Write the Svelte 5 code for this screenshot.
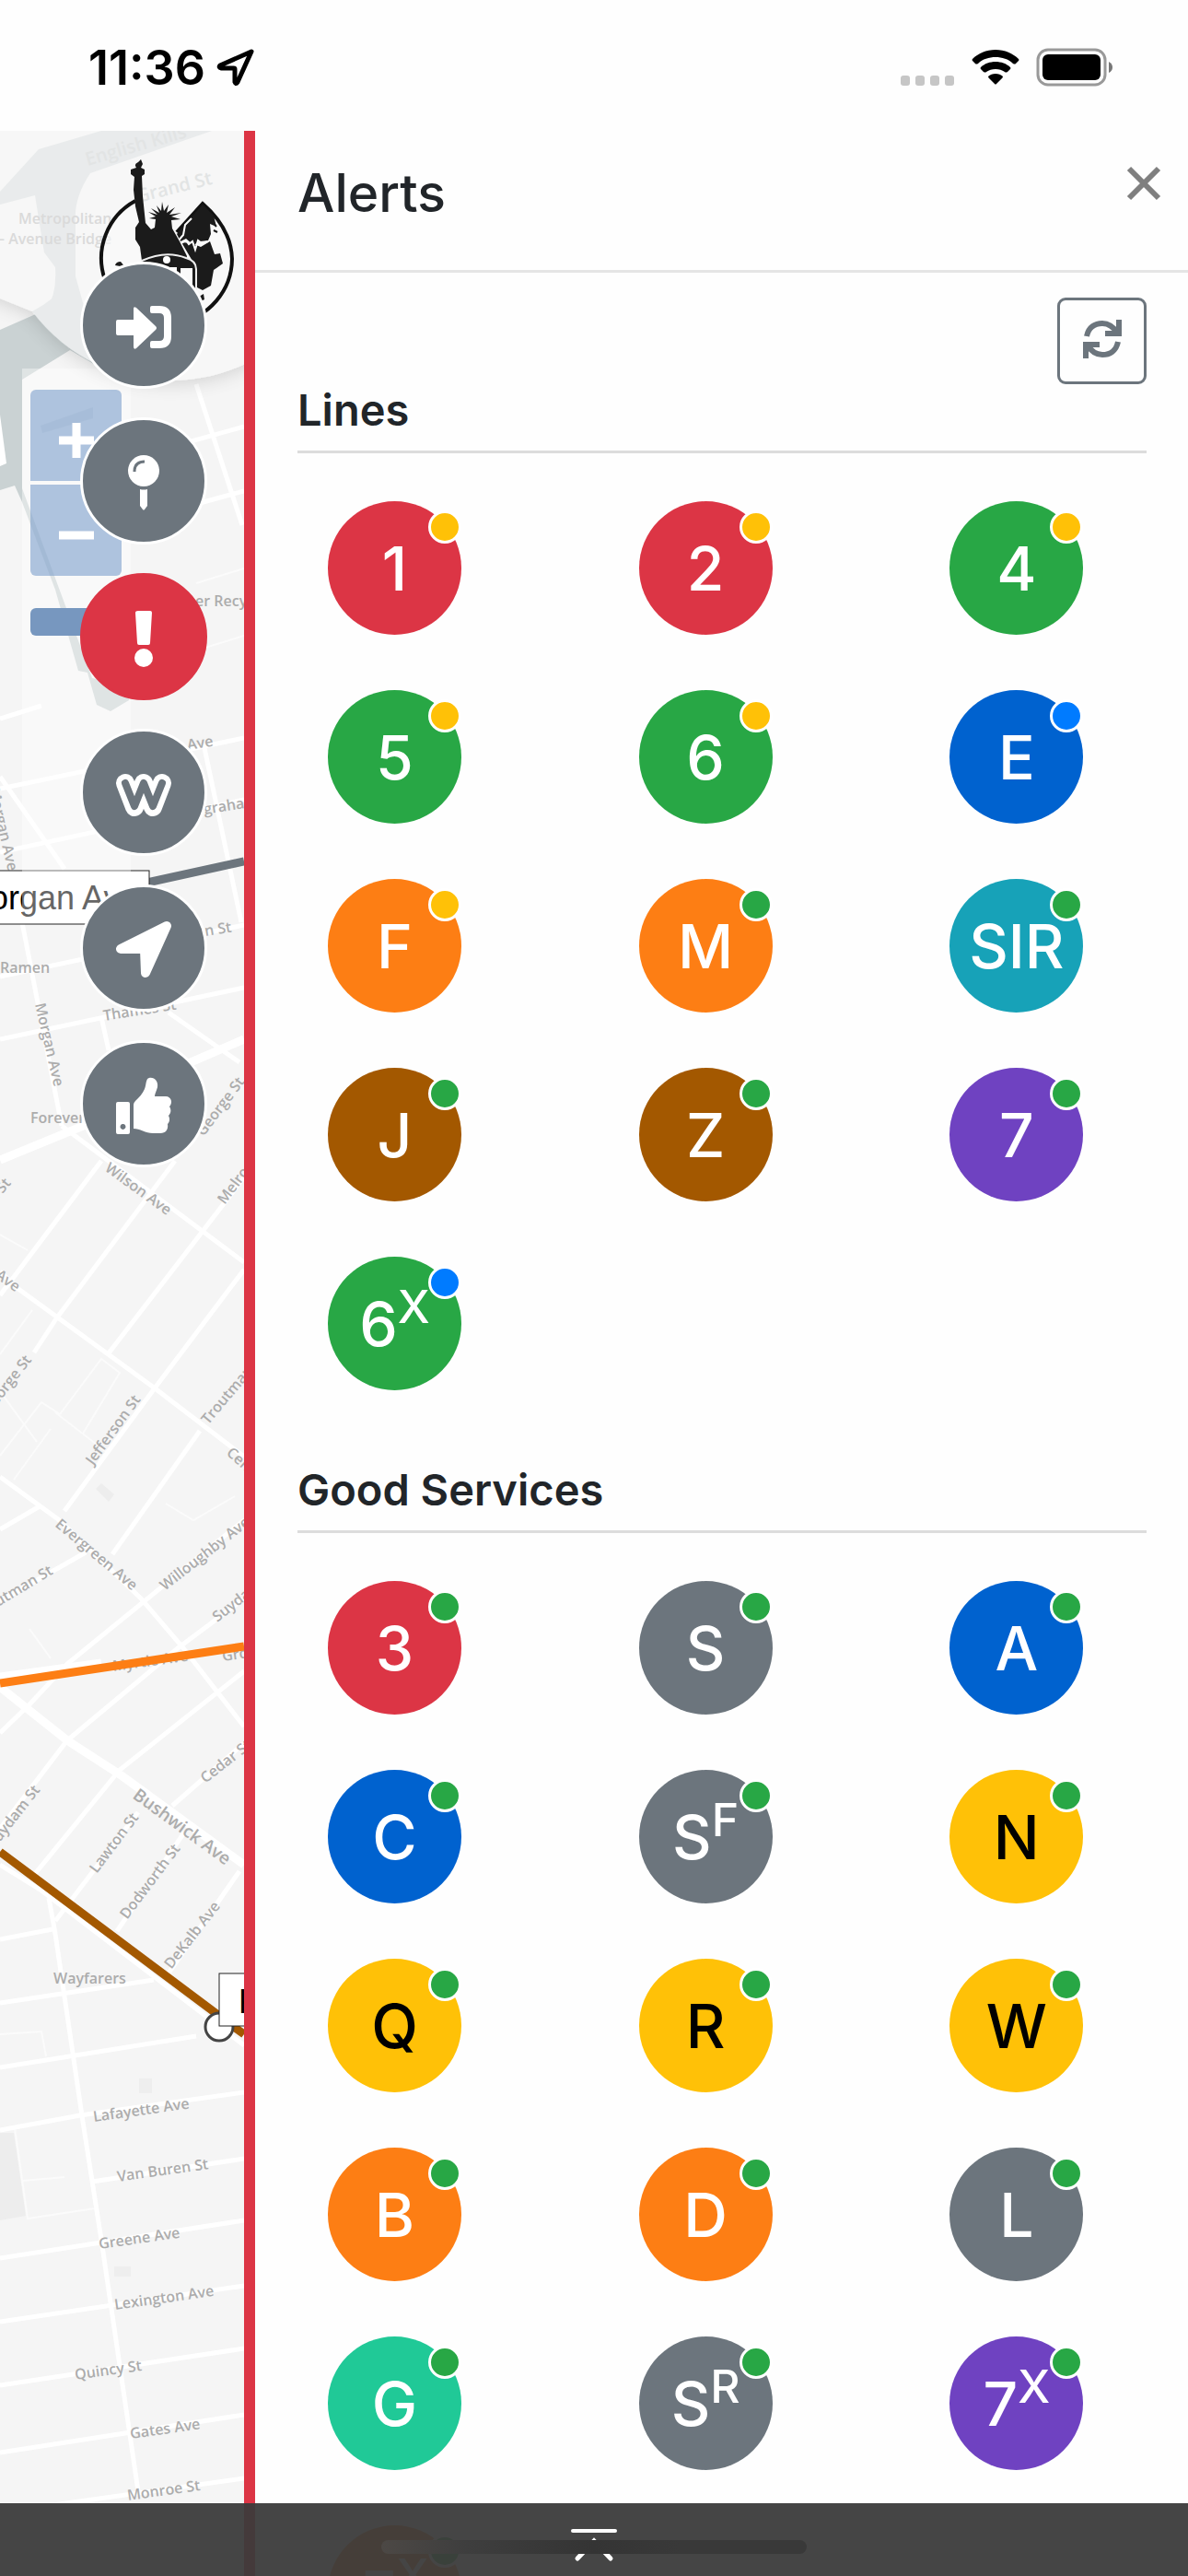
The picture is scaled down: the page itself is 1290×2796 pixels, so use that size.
<script lang="ts">
  type Route = { name: string; sup?: string; color: string; status: string };

  const sections: { title: string; routes: Route[] }[] = [
    {
      title: "Lines",
      routes: [
        { name: "1", color: "red", status: "yellow" },
        { name: "2", color: "red", status: "yellow" },
        { name: "4", color: "green", status: "yellow" },
        { name: "5", color: "green", status: "yellow" },
        { name: "6", color: "green", status: "yellow" },
        { name: "E", color: "blue", status: "primary" },
        { name: "F", color: "orange", status: "yellow" },
        { name: "M", color: "orange", status: "green" },
        { name: "SIR", color: "cyan", status: "green" },
        { name: "J", color: "brown", status: "green" },
        { name: "Z", color: "brown", status: "green" },
        { name: "7", color: "purple", status: "green" },
        { name: "6", sup: "X", color: "green", status: "primary" },
      ],
    },
    {
      title: "Good Services",
      routes: [
        { name: "3", color: "red", status: "green" },
        { name: "S", color: "gray", status: "green" },
        { name: "A", color: "blue", status: "green" },
        { name: "C", color: "blue", status: "green" },
        { name: "S", sup: "F", color: "gray", status: "green" },
        { name: "N", color: "yellow", status: "green" },
        { name: "Q", color: "yellow", status: "green" },
        { name: "R", color: "yellow", status: "green" },
        { name: "W", color: "yellow", status: "green" },
        { name: "B", color: "orange", status: "green" },
        { name: "D", color: "orange", status: "green" },
        { name: "L", color: "gray", status: "green" },
        { name: "G", color: "teal", status: "green" },
        { name: "S", sup: "R", color: "gray", status: "green" },
        { name: "7", sup: "X", color: "purple", status: "green" },
        { name: "F", sup: "X", color: "orange", status: "green" },
      ],
    },
  ];

  const menu = ["Sign in", "Stations", "Alerts", "Weekender", "Locate me", "Feedback"];

  const streets = [
    "213,417 263,570", "265,463 143,497", "265,533 180,556", "0,780 45,766", "0,856 265,801",
    "0,843 70,943", "0,925 265,868", "222,812 262,1001", "24,1001 67,1222", "0,1060 265,1004",
    "0,1128 265,1072", "110,1104 118,1140", "183,1099 260,1153", "67,1222 265,1370",
    "110,1260 0,1406", "190,1260 62,1430 37,1468", "265,1278 117,1470", "265,1378 167,1508 70,1640",
    "217,1553 122,1687", "0,1380 20,1399 167,1506 265,1581", "0,1603 63,1649 153,1735 200,1790 265,1874",
    "0,1660 43,1635", "0,1738 93,1685", "265,1650 73,1806 33,1849 0,1881", "265,1735 193,1789 73,1889 0,1985",
    "265,1814 130,1921 37,2035", "265,1892 187,1960", "150,1967 60,2085", "200,1989 127,2096",
    "260,2031 180,2146", "0,2024 45,2052 265,2220", "0,2105 57,2094", "53,2060 60,2099 90,2303 110,2431 150,2704",
    "0,2174 167,2149", "0,2244 213,2210", "0,2312 87,2296 265,2271", "100,2368 265,2343",
    "0,2451 265,2410", "0,2520 265,2481", "0,2589 265,2549", "0,2662 265,2621", "0,2727 265,2690",
  ];

  const alleys = [
    "0,1580 45,1522 65,1535", "65,1535 110,1475 130,1490 90,1556", "15,1606 55,1551", "60,1533 118,1578",
    "0,1470 35,1422", "180,1632 210,1650 255,1624", "0,1340 30,1357", "0,1510 40,1565", "32,1768 55,1800",
    "16,2310 30,2408 103,2397", "25,2367 70,2363", "0,2208 45,2205 50,2232", "213,633 265,617", "200,710 265,690",
  ];

  // x, y, rotation, text
  const labels: [number, number, number, string][] = [
    [212, 658, 0, "er Recy"], [204, 814, -9, "Ave"], [222, 884, -9, "graham"], [223, 1016, -9, "n St"],
    [0, 1056, 0, "Ramen"], [113, 1108, -9, "Thames St"], [38, 1090, 77, "Morgan Ave"], [-12, 856, 77, "Morgan Ave"],
    [33, 1219, 0, "Forever"], [221, 1234, -53, "George St"], [113, 1270, 36, "Wilson Ave"], [244, 1308, -53, "Melrose"],
    [-4, 1304, -50, "t St"], [-6, 1386, 36, "Ave"], [-4, 1526, -52, "eorge St"], [101, 1591, -54, "Jefferson St"],
    [226, 1547, -50, "Troutman"], [245, 1578, 42, "Central"], [59, 1656, 40, "Evergreen Ave"], [-2, 1744, -31, "utman St"],
    [179, 1727, -38, "Willoughby Ave"], [236, 1761, -38, "Suydam"], [123, 1814, -8, "Myrtle Ave"], [242, 1803, -8, "Grove"],
    [-6, 2007, -52, "Suydam St"], [105, 2034, -53, "Lawton St"], [138, 2084, -53, "Dodworth St"], [186, 2138, -52, "DeKalb Ave"],
    [223, 1936, -38, "Cedar St"], [58, 2153, 0, "Wayfarers"], [102, 2303, -8, "Lafayette Ave"], [128, 2368, -8, "Van Buren St"],
    [108, 2441, -8, "Greene Ave"], [125, 2507, -8, "Lexington Ave"], [82, 2583, -8, "Quincy St"],
    [142, 2647, -8, "Gates Ave"], [139, 2714, -8, "Monroe St"],
  ];
</script>

<svelte:head>
  <title>Alerts</title>
</svelte:head>

<div class="screen">
  <header class="status-bar">
    <div class="clock">
      <span>11:36</span>
      <svg width="42" height="42" viewBox="0 0 42 42" aria-hidden="true">
        <path d="M38 4 L4 19 Q2 21 5 22 H19 Q20 22 20 23 V37 Q21 40 23 37 Z" fill="none" stroke="#000" stroke-width="5" stroke-linejoin="round" />
      </svg>
    </div>
    <div class="indicators">
      <div class="signal"><i></i><i></i><i></i><i></i></div>
      <svg width="52" height="40" viewBox="0 0 52 40" aria-hidden="true">
        <path d="M26 1 C16 1 7 5 1 11 Q0 12 1 13 L4 16 Q5 17 7 16 C12 11 19 9 26 9 C33 9 40 11 45 16 Q47 17 48 16 L51 13 Q52 12 51 11 C45 5 36 1 26 1 Z" />
        <path d="M26 14 C20 14 14 16 10 20 Q9 21 10 22 L13 25 Q15 26 16 25 C19 23 22 22 26 22 C30 22 33 23 36 25 Q37 26 39 25 L42 22 Q43 21 42 20 C38 16 32 14 26 14 Z" />
        <path d="M26 27 C23 27 20 28 18 30 Q18 31 19 32 L25 38 Q26 39 27 38 L33 32 Q34 31 34 30 C32 28 29 27 26 27 Z" />
      </svg>
      <svg width="84" height="40" viewBox="0 0 84 40" aria-hidden="true">
        <rect x="1" y="1" width="73" height="38" rx="11" fill="none" stroke="#999" stroke-width="3" />
        <rect x="6" y="6" width="63" height="28" rx="6" />
        <path d="M78 14 Q82 16 82 20 Q82 24 78 26 Z" fill="#777" />
      </svg>
    </div>
  </header>

  <main class="map">
    <svg class="map-canvas" viewBox="0 142 265 2654" preserveAspectRatio="xMinYMin slice" aria-hidden="true">
      <defs>
        <filter id="soft" x="-20%" y="-20%" width="140%" height="140%">
          <feDropShadow dx="0" dy="4" stdDeviation="10" flood-color="#000" flood-opacity=".2" />
        </filter>
      </defs>
      <rect y="142" width="265" height="2654" fill="#f5f5f5" />

      <!-- Newtown Creek -->
      <g fill="#cad2d3">
        <path d="M0 208 L42 162 L110 142 H230 L98 188 Q80 215 82 240 V330 L76 380 L24 412 V530 L100 736 L140 744 V760 L120 772 L105 765 L95 730 L85 728 L60 640 L24 545 L16 527 L0 532 V358 L50 336 Q62 320 60 290 L48 274 L38 212 L0 222 Z" />
        <path d="M76 380 L35 338 Q60 325 82 300 L110 400 L76 380 Z" />
        <path d="M44 462 L101 442 V454 L46 470 Z" opacity=".6" />
      </g>
      <path d="M0 450 L7 503 L0 506 Z" fill="#fff" />
      <rect x="151" y="2256" width="14" height="16" fill="#eee" />
      <rect x="124" y="2460" width="18" height="11" fill="#eee" />
      <path d="M0 2315 H15 L28 2405 L0 2410 Z" fill="#ededed" />
      <path d="M104 1616 L110 1610 L124 1622 L118 1630 Z" fill="#ededed" />

      <g fill="none" stroke="#fbfbfb" stroke-width="2">
        {#each alleys as points}
          <polyline {points} />
        {/each}
      </g>
      <g fill="none" stroke="#fff" stroke-width="5">
        {#each streets as points}
          <polyline {points} />
        {/each}
      </g>
      <g fill="none" stroke="#fff" stroke-width="9">
        <polyline points="0,1259 93,1221 207,1153 265,1128" />
        <polyline points="0,1831 20,1847 73,1889 133,1928 265,2024" />
        <polyline points="0,1820 110,1805" />
      </g>

      <g class="street-names">
        {#each labels as [x, y, turn, name]}
          <text transform="translate({x} {y}) rotate({turn})">{name}</text>
        {/each}
        <text class="avenue" transform="translate(143 1951) rotate(36)">Bushwick Ave</text>
      </g>

      <!-- subway lines and station tags -->
      <g fill="none" stroke-width="9">
        <path d="M155 959 L265 935" stroke="#6c757d" />
        <path d="M0 1827 L265 1787" stroke="#fd7e14" />
        <path d="M0 2010 L265 2208" stroke="#a35800" />
      </g>
      <circle cx="238" cy="2200" r="15" fill="#fff" stroke="#444" stroke-width="3" />
      <g class="stations">
        <rect x="-60" y="945" width="222" height="58" />
        <text x="-41" y="987">Morgan Av</text>
        <rect x="238" y="2142" width="120" height="57" />
        <text x="259" y="2185">Kosciuszko St</text>
      </g>

      <rect x="24" y="400" width="118" height="600" fill="#fff" opacity=".4" />

      <path d="M-60 100 V300 L35 338 C75 390 130 413 184 413 C215 413 245 406 270 393 L340 330 V100 Z" fill="#f8f8f8" opacity=".68" filter="url(#soft)" />
      <g class="street-names">
        <text class="place" x="20" y="243">Metropolitan</text>
        <text class="place" x="-3" y="265">– Avenue Bridge</text>
        <text class="faint" transform="translate(95 180) rotate(-16)">English Kills</text>
        <text class="faint" transform="translate(150 220) rotate(-14)">Grand St</text>
      </g>

      <!-- liberty logo -->
      <g fill="#1b1b1b">
        <path d="M147 218 A71 71 0 1 0 252 281 Q251 248 220 221 L192 252" fill="#fafafa" fill-opacity=".6" stroke="#111" stroke-width="4" />
        <path d="M220 222 L232 234 L235 246 L228 243 L229 254 L226 261 L217 262 L210 266 L202 259 L196 262 L192 254 L204 240 Z" />
        <path d="M197 263 L208 264 L218 268 L228 262 L233 276 L239 275 L242 286 L235 291 L232 293 L229 310 L220 315 L214 312 L210 285 Z" />
        <path d="M230 240 l5 6 M232 250 l4 2" stroke="#1b1b1b" stroke-width="2" />
        <path d="M193 262 L199 255 L201 244 L208 237 M197 264 l5 -3 3 4 4 -3 3 9 3 -10 4 3 7 -2" fill="none" stroke="#fff" stroke-width="2" />
        <path d="M148 182 Q145 178 150 176 L153 173 L155 178 L153 182 L157 184 V189 L154 191 L155 213 L158 242 L164 249 L168 247 L169 238 L162 237 L169 235 L161 230 L171 233 L164 226 L173 231 L170 223 L175 229 L176 219 L178 229 L183 222 L181 231 L190 225 L184 233 L197 231 L186 235 L196 238 L186 239 L187 248 L195 262 L203 278 L201 286 L154 283 L152 268 L147 260 V247 L151 241 L147 224 L145 206 L146 192 L142 189 V184 Z" />
        <path d="M154 283 Q180 271 202 280 Q213 283 213 292 V330 H145 Z" stroke="#eee" stroke-width="2" />
        <circle cx="181" cy="282" r="4" fill="#fff" />
        <path d="M196 291 H209 V320 H196 Z M185 290 H192 V297 H185 Z" fill="#fafafa" />
        <path d="M125 288 Q126 284 131 284 L136 290 Z M216 322 l5 -3 1 6 -4 2 Z" />
      </g>
    </svg>

    <div class="zoom">
      <button aria-label="Zoom in"><svg width="38" height="38" viewBox="0 0 38 38"><path d="M0 19 H38 M19 0 V38" stroke="#fff" stroke-width="9" /></svg></button>
      <button aria-label="Zoom out"><svg width="38" height="38" viewBox="0 0 38 38"><path d="M0 19 H38" stroke="#fff" stroke-width="9" /></svg></button>
      <span class="zoom-thumb"></span>
    </div>

    <nav class="menu">
      {#each menu as item}
        <button class="menu-btn" class:menu-btn--active={item === "Alerts"} aria-label={item}>
          <svg width="60" height="60" viewBox="0 0 60 60" fill="#fff" aria-hidden="true">
            {#if item === "Sign in"}
              <path d="M2 24 H19 V12 Q19 9 22 11 L43 31 Q45 33 43 35 L22 55 Q19 57 19 53 V41 H2 Q0 41 0 39 V26 Q0 24 2 24 Z" />
              <path d="M39 9 H47 Q60 9 60 22 V42 Q60 55 47 55 H39 Q37 55 37 53 V49 Q37 47 39 47 H47 Q52 47 52 42 V22 Q52 17 47 17 H39 Q37 17 37 15 V11 Q37 9 39 9 Z" />
            {:else if item === "Stations"}
              <circle cx="30" cy="19" r="17" />
              <path d="M20 20 Q20 9 31 9" fill="none" stroke="#6c757d" stroke-width="3" />
              <path d="M26 39 Q30 40 34 39 V57 L31 61 Q30 62 29 61 L26 57 Z" />
            {:else if item === "Alerts"}
              <path d="M24 2 H37 Q39 2 39 4 L37 37 Q37 39 35 39 H25 Q23 39 23 37 L21 4 Q21 2 24 2 Z" />
              <circle cx="30" cy="53" r="10" />
            {:else if item === "Weekender"}
              <g fill="none" stroke-linecap="round" stroke-linejoin="round">
                <path d="M10 20 L20 46 L30 20 L40 46 L50 20" stroke="#fff" stroke-width="20" />
                <path d="M10 20 L20 45 L30 20 L40 45 L50 20" stroke="#6c757d" stroke-width="8" />
              </g>
            {:else if item === "Locate me"}
              <path d="M55 6 L5 31 H31 L32 57 Z" stroke="#fff" stroke-width="10" stroke-linejoin="round" />
            {:else}
              <path fill-rule="evenodd" d="M2 28 H13 Q15 28 15 30 V61 Q15 63 13 63 H2 Q0 63 0 61 V30 Q0 28 2 28 Z M7 52 a3 3 0 1 0 1 0 Z" />
              <path d="M19 31 Q19 29 21 27 C25 23 29 19 31 14 C33 9 32 3 36 2 C42 1 46 6 45 12 C44 16 42 19 42 22 H54 C60 22 62 29 58 33 C60 36 60 40 57 43 C59 47 58 50 56 52 C57 58 54 62 48 62 H40 C32 62 26 57 19 57 Z" />
            {/if}
          </svg>
        </button>
      {/each}
    </nav>
  </main>

  <aside class="panel">
    <header class="panel-header">
      <h1>Alerts</h1>
      <button class="close" aria-label="Close">
        <svg width="36" height="36" viewBox="0 0 36 36"><path d="M2 2 L34 34 M34 2 L2 34" stroke="#7f7f7f" stroke-width="6" /></svg>
      </button>
    </header>
    <div class="panel-body">
      <button class="refresh" aria-label="Refresh">
        <svg width="42" height="42" viewBox="0 0 42 42" fill="none" stroke="#6c757d" stroke-width="6">
          <path d="M4 18 C6 8 13 4 21 4 C29 4 34 9 38 15" />
          <path d="M39 0 V15 H24" />
          <path d="M38 24 C36 34 29 38 21 38 C13 38 8 33 4 27" />
          <path d="M3 42 V27 H18" />
        </svg>
      </button>
      {#each sections as section}
        <section>
          <h2>{section.title}</h2>
          <ul class="routes">
            {#each section.routes as route}
              <li>
                <button class="route route--{route.color}">
                  <span>{route.name}{#if route.sup}<sup>{route.sup}</sup>{/if}</span>
                  <i class="dot dot--{route.status}"></i>
                </button>
              </li>
            {/each}
          </ul>
        </section>
      {/each}
    </div>
  </aside>

  <footer class="drawer">
    <button aria-label="Expand">
      <svg width="52" height="34" viewBox="0 0 52 34" fill="none" stroke="#fff" stroke-width="4" stroke-linecap="round">
        <path d="M3 2 H49" />
        <path d="M8 32 L26 13 L44 32" stroke-width="5" />
      </svg>
    </button>
    <span class="home-indicator"></span>
  </footer>
</div>

<style>
  :global(body) {
    margin: 0;
  }

  .screen {
    position: relative;
    display: grid;
    grid-template: 142px minmax(0, 1fr) / 265px minmax(0, 1fr);
    height: 100vh;
    overflow: hidden;
    background: #fefefe;
    color: #212529;
    font-family: Inter, "Liberation Sans", sans-serif;
  }
  button {
    padding: 0;
    border: 0;
    background: none;
    color: inherit;
    font: inherit;
  }
  svg {
    display: block;
    overflow: visible;
  }

  .status-bar {
    grid-column: 1 / -1;
    display: flex;
    justify-content: space-between;
    align-items: center;
    padding: 4px 80px 0 96px;
    color: #000;
  }
  .clock {
    display: flex;
    align-items: center;
    gap: 12px;
    font-size: 52px;
    font-weight: 600;
  }
  .indicators {
    display: flex;
    align-items: center;
    gap: 19px;
  }
  .signal {
    display: flex;
    align-self: flex-end;
    gap: 6px;
  }
  .signal i {
    width: 10px;
    height: 11px;
    border-radius: 3px;
    background: #c6c6c6;
  }

  .map {
    position: relative;
    overflow: hidden;
  }
  .map-canvas {
    width: 100%;
    height: 100%;
    overflow: hidden;
  }
  .street-names {
    fill: #acacac;
    font-family: "Open Sans", sans-serif;
    font-size: 16px;
    font-weight: 600;
  }
  .avenue {
    font-size: 19px;
  }
  .place {
    font-size: 16px;
    fill: #dadada;
  }
  .faint {
    font-size: 20px;
    fill: #e2e4e4;
  }
  .stations rect {
    fill: #fff;
    stroke: #222;
  }
  .stations text {
    font-family: "Liberation Sans", sans-serif;
    font-size: 36px;
  }

  .zoom {
    position: absolute;
    top: 281px;
    left: 33px;
    display: flex;
    flex-direction: column;
    gap: 4px;
    width: 99px;
  }
  .zoom button {
    display: grid;
    place-items: center;
    height: 99px;
    padding-top: 10px;
    box-sizing: border-box;
    background: rgba(123, 158, 204, 0.6);
  }
  .zoom button:first-child {
    border-radius: 6px 6px 0 0;
  }
  .zoom button:nth-child(2) {
    border-radius: 0 0 6px 6px;
  }
  .zoom-thumb {
    height: 30px;
    margin-top: 31px;
    border-radius: 6px;
    background: #7797bf;
  }

  .menu {
    position: absolute;
    top: 142px;
    left: 87px;
    display: flex;
    flex-direction: column;
    gap: 31px;
  }
  .menu-btn {
    display: grid;
    place-items: center;
    width: 138px;
    height: 138px;
    box-sizing: border-box;
    border: 3px solid #fff;
    border-radius: 50%;
    background: #6c757d;
  }
  .menu-btn--active {
    border-color: #dc3545;
    background: #dc3545;
  }

  .panel {
    border-left: 12px solid #dc3545;
    overflow: hidden;
  }
  .panel-header {
    display: flex;
    justify-content: space-between;
    align-items: flex-start;
    padding: 30px 30px 46px 46px;
    border-bottom: 3px solid #e5e5e5;
  }
  h1 {
    margin: 0;
    font-size: 57px;
    font-weight: 500;
    line-height: 75px;
  }
  .close {
    margin-top: 9px;
  }
  .panel-body {
    padding: 27px 45px 0 46px;
  }
  .refresh {
    display: grid;
    place-items: center;
    width: 97px;
    height: 94px;
    box-sizing: border-box;
    margin-left: auto;
    padding-bottom: 4px;
    border: 3px solid #6c757d;
    border-radius: 9px;
  }
  section + section {
    margin-top: 80px;
  }
  h2 {
    margin: 0;
    padding-bottom: 16px;
    border-bottom: 3px solid #dcdcdc;
    font-size: 47px;
    font-weight: 600;
    line-height: 56px;
  }

  .routes {
    display: grid;
    grid-template-columns: repeat(3, 1fr);
    row-gap: 60px;
    margin: 52px -45px 0 -46px;
    padding: 0;
    list-style: none;
  }
  .routes li {
    padding-left: 79px;
  }
  .route {
    position: relative;
    display: grid;
    place-items: center;
    width: 145px;
    height: 145px;
    border-radius: 50%;
    color: #fff;
    font-size: 66px;
    font-weight: 500;
  }
  sup {
    font-size: 50px;
    line-height: 0;
    vertical-align: 25px;
  }
  .route--red {
    background: #dc3545;
  }
  .route--green {
    background: #28a745;
  }
  .route--blue {
    background: #0062cf;
  }
  .route--orange {
    background: #fd7e14;
  }
  .route--cyan {
    background: #17a2b8;
  }
  .route--brown {
    background: #a35800;
  }
  .route--purple {
    background: #6f42c1;
  }
  .route--gray {
    background: #6c757d;
  }
  .route--teal {
    background: #20c997;
  }
  .route--yellow {
    background: #ffc107;
    color: #000;
  }

  .dot {
    position: absolute;
    top: 10px;
    right: 0;
    width: 30px;
    height: 30px;
    border: 3px solid #fff;
    border-radius: 50%;
  }
  .dot--yellow {
    background: #ffc107;
  }
  .dot--green {
    background: #28a745;
  }
  .dot--primary {
    background: #007bff;
  }

  .drawer {
    position: absolute;
    inset: auto 0 0;
    display: flex;
    justify-content: center;
    height: 79px;
    background: rgba(59, 59, 59, 0.95);
  }
  .drawer button {
    align-self: flex-start;
    margin-top: 28px;
  }
  .home-indicator {
    position: absolute;
    bottom: 24px;
    width: 462px;
    height: 15px;
    border-radius: 8px;
    background: linear-gradient(90deg, #4c4845, #3e3e3e 20%, #343434 50%, #393939 70%);
  }
</style>
